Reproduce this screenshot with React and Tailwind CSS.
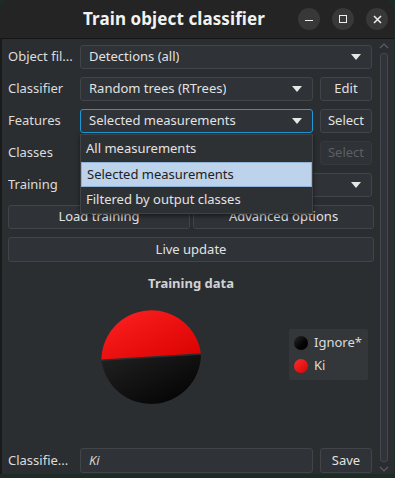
import React from 'react';

const font = { fontFamily: '"Noto Sans", "Open Sans", sans-serif' };

const Caret = ({ dim }) => (
  <svg width="10" height="6" viewBox="0 0 10 6" className="shrink-0">
    <path d="M0 0 L10 0 L5 6 Z" fill={dim ? '#8a8e92' : '#e6e6e6'} />
  </svg>
);

const Combo = ({ text, focused, className = '' }) => (
  <div
    className={`h-6 flex items-center justify-between pl-2 pr-2.5 rounded-[3px] border bg-[#2f3236] ${
      focused ? 'border-[#1d9ad6]' : 'border-[#414549]'
    } ${className}`}
  >
    <span className="text-[13px] text-[#e2e2e2] truncate">{text}</span>
    <Caret />
  </div>
);

const Btn = ({ children, disabled, className = '' }) => (
  <div
    className={`h-6 flex items-center justify-center rounded-[3px] border bg-[#2f3236] text-[13px] ${
      disabled ? 'border-[#35393c] text-[#5c6064] bg-[#2c2f32]' : 'border-[#414549] text-[#e2e2e2]'
    } ${className}`}
  >
    {children}
  </div>
);

const Label = ({ children }) => (
  <div className="w-[72px] shrink-0 text-[13px] text-[#dcdcdc] whitespace-nowrap overflow-hidden">{children}</div>
);

const Pie = () => (
  <svg width="102" height="102" viewBox="-51 -51 102 102">
    <defs>
      <linearGradient id="red" x1="0" y1="0" x2="1" y2="1">
        <stop offset="0" stopColor="#ff2222" />
        <stop offset="1" stopColor="#d80000" />
      </linearGradient>
      <linearGradient id="blk" x1="0" y1="0" x2="1" y2="1">
        <stop offset="0" stopColor="#222222" />
        <stop offset="1" stopColor="#000000" />
      </linearGradient>
    </defs>
    <path d="M50 -1 A50 50 0 0 1 -49.6 5.2 Z" fill="url(#blk)" />
    <path d="M50 -1 A50 50 0 0 0 -49.6 5.2 Z" fill="url(#red)" />
    <line x1="50" y1="-1" x2="-49.6" y2="5.2" stroke="#2b2e31" strokeWidth="1.5" />
  </svg>
);

export default function App() {
  return (
    <div className="w-[395px] h-[478px] bg-[#1c2b24] overflow-hidden" style={font}>
      <div className="w-[394px] h-[474px] flex flex-col rounded-t-[11px] overflow-hidden bg-[#242424]">
        {/* title bar */}
        <div className="h-[38px] shrink-0 relative flex items-center">
          <div className="absolute left-[83px] top-[6px] text-[17px] font-bold text-[#f2f2f2] tracking-[0.1px]">
            Train object classifier
          </div>
          <div className="ml-auto mr-[6px] flex gap-[12px] items-center">
            <div className="w-[22px] h-[22px] rounded-full bg-[#383838] flex items-center justify-center">
              <div className="w-[8px] h-[1.5px] bg-[#eeeeee] mt-[3px]" />
            </div>
            <div className="w-[22px] h-[22px] rounded-full bg-[#383838] flex items-center justify-center">
              <div className="w-[8px] h-[8px] border-[1.5px] border-[#eeeeee]" />
            </div>
            <div className="w-[22px] h-[22px] rounded-full bg-[#383838] flex items-center justify-center">
              <svg width="9" height="9" viewBox="0 0 9 9">
                <path d="M1 1 L8 8 M8 1 L1 8" stroke="#eeeeee" strokeWidth="1.5" />
              </svg>
            </div>
          </div>
        </div>

        {/* content */}
        <div className="flex-1 flex border-t border-[#151515] border-l-2 border-l-[#1a1a1a] bg-[#2b2e31]">
          <div className="w-[372px] shrink-0 pl-[6px] pt-[6px] flex flex-col">
            <div className="flex flex-col gap-2">
              <div className="flex items-center">
                <Label>Object fil...</Label>
                <Combo text="Detections (all)" className="w-[292px]" />
              </div>
              <div className="flex items-center">
                <Label>Classifier</Label>
                <Combo text="Random trees (RTrees)" className="w-[233px]" />
                <Btn className="w-[52px] ml-[7px]">Edit</Btn>
              </div>
              <div className="flex items-center relative">
                <Label>Features</Label>
                <Combo text="Selected measurements" focused className="w-[233px]" />
                <Btn className="w-[52px] ml-[7px]">Select</Btn>
                {/* popup */}
                <div className="absolute left-[72px] top-[25px] w-[233px] z-10 bg-[#2e3134] border border-[#3f4347] shadow-[0_2px_4px_rgba(0,0,0,0.5)] py-[1px]">
                  <div className="h-[26px] flex items-center px-[5px] text-[13px] text-[#e2e2e2]">All measurements</div>
                  <div className="h-[25px] flex items-center px-[5px] text-[13px] text-[#1e2124] bg-[#bcd3eb] border border-[#8fb2d6]">
                    Selected measurements
                  </div>
                  <div className="h-[25px] flex items-center px-[5px] text-[13px] text-[#e2e2e2]">Filtered by output classes</div>
                </div>
              </div>
              <div className="flex items-center">
                <Label>Classes</Label>
                <div className="w-[233px]" />
                <Btn disabled className="w-[52px] ml-[7px]">Select</Btn>
              </div>
              <div className="flex items-center">
                <Label>Training</Label>
                <Combo text="" className="w-[292px]" />
              </div>
              <div className="flex gap-[3px]">
                <Btn className="w-[182px]">Load training</Btn>
                <Btn className="w-[181px]">Advanced options</Btn>
              </div>
              <Btn className="w-[366px] h-[25px]">Live update</Btn>
            </div>

            <div className="mt-[12px] text-center text-[13px] font-bold text-[#d2d2d2] w-[366px]">Training data</div>

            <div className="flex items-center mt-[10px]">
              <div className="ml-[92px]">
                <Pie />
              </div>
              <div className="ml-[87px] w-[79px] h-[51px] rounded-[2px] bg-[#33373a] flex flex-col justify-center gap-[8px] pl-[5px]">
                <div className="flex items-center gap-[6px] h-[15px]">
                  <div className="w-[14px] h-[14px] rounded-full bg-gradient-to-br from-[#2a2a2a] to-black" />
                  <span className="text-[13px] text-[#dcdcdc]">Ignore*</span>
                </div>
                <div className="flex items-center gap-[6px] h-[15px]">
                  <div className="w-[14px] h-[14px] rounded-full bg-gradient-to-br from-[#ff2a2a] to-[#d00000]" />
                  <span className="text-[13px] text-[#dcdcdc]">Ki</span>
                </div>
              </div>
            </div>

            <div className="mt-auto mb-[1px] flex items-center">
              <Label>Classifie...</Label>
              <div className="w-[233px] h-[25px] flex items-center pl-2 rounded-[3px] border border-[#414549] bg-[#2f3236] text-[13px] italic text-[#cfcfcf]">
                Ki
              </div>
              <Btn className="w-[52px] ml-[7px] h-[25px]">Save</Btn>
            </div>
          </div>

          {/* scrollbar */}
          <div className="flex-1 flex flex-col items-center pt-[4px] pb-[2px]">
            <svg width="10" height="6" viewBox="0 0 10 6">
              <path d="M1 5 L5 1 L9 5" stroke="#5a5e62" strokeWidth="1.2" fill="none" />
            </svg>
            <div className="flex-1 w-[8px] my-[4px] rounded-[3px] border border-[#45494d] bg-[#30343a]" />
            <svg width="10" height="6" viewBox="0 0 10 6">
              <path d="M1 1 L5 5 L9 1" stroke="#5a5e62" strokeWidth="1.2" fill="none" />
            </svg>
          </div>
        </div>
      </div>
    </div>
  );
}
